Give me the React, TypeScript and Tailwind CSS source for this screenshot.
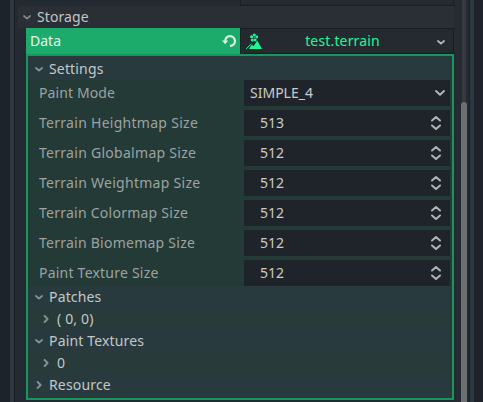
import type { ReactNode } from "react";

function Chevron({ dir = "down", className = "" }: { dir?: "down" | "right"; className?: string }) {
  return (
    <svg width="8" height="8" viewBox="0 0 8 8" fill="none" stroke="currentColor" strokeWidth="1.9" strokeLinecap="round" strokeLinejoin="round" className={`shrink-0 ${className}`}>
      <path d={dir === "down" ? "M1 3 4 5.6 7 3" : "M2.6 1 5.6 4 2.6 7"} />
    </svg>
  );
}

function ResetIcon() {
  return (
    <svg width="14" height="14" viewBox="0 0 14 14" className="shrink-0 text-[#dcefe5]">
      <path d="M3.2 7.4A4.9 4.9 0 1 1 8 11.9" fill="none" stroke="currentColor" strokeWidth="2.1" />
      <path d="M0 6.6H6.2L3.1 10.2Z" fill="currentColor" />
    </svg>
  );
}

function TerrainIcon() {
  return (
    <svg width="16" height="16" viewBox="0 0 16 16" className="shrink-0 text-[#1dfa95]" fill="currentColor">
      <path d="M3 16 6 11.6 7.6 13.2 11.2 7.6 16 16Z" />
      <path d="M0.2 15.8 5.4 10.8" stroke="currentColor" strokeWidth="1" fill="none" />
      <circle cx="8.3" cy="2" r="1.5" />
      <circle cx="5.6" cy="3.7" r="1.5" />
      <circle cx="10.8" cy="4" r="1.4" />
      <circle cx="6.3" cy="7" r="1.5" />
      <circle cx="9.2" cy="7" r="1.4" />
      <circle cx="8.2" cy="4.6" r="0.7" />
    </svg>
  );
}

function Spinner() {
  return (
    <svg width="12" height="16" viewBox="0 0 12 16" fill="none" stroke="#b1b4b6" strokeWidth="2" strokeLinecap="round" strokeLinejoin="round">
      <path d="M2 5.5 6 2 10 5.5M2 10.5 6 14 10 10.5" />
    </svg>
  );
}

function Section({ label, nested = false, open = false }: { label: string; nested?: boolean; open?: boolean }) {
  return (
    <div className={`flex h-[22px] items-center tracking-[0.16px] text-[#c3c8c8] ${nested ? "bg-[#283b3a] pl-[14px]" : "bg-[#283a3d] pl-[7px]"}`}>
      <Chevron dir={open ? "down" : "right"} className="text-[#87908f]" />
      <span className={nested ? "ml-[7px]" : "ml-[6px]"}>{label}</span>
    </div>
  );
}

function Row({ label, tracking, children }: { label: string; tracking: string; children: ReactNode }) {
  return (
    <div className="mr-[2px] flex h-[26px]">
      <div className={`flex w-[216px] items-center pl-[11px] text-[#9da3a2] ${tracking}`}>{label}</div>
      <div className="flex flex-1 items-center justify-between bg-[#1f242a] text-[#c9cbcc]">{children}</div>
    </div>
  );
}

const sizes: [string, string, string][] = [
  ["Terrain Heightmap Size", "513", "tracking-[0.28px]"],
  ["Terrain Globalmap Size", "512", "tracking-[0.28px]"],
  ["Terrain Weightmap Size", "512", "tracking-[0.28px]"],
  ["Terrain Colormap Size", "512", "tracking-[0.25px]"],
  ["Terrain Biomemap Size", "512", "tracking-[0.25px]"],
  ["Paint Texture Size", "512", "tracking-[0.22px]"],
];

export default function App() {
  return (
    <div className="flex h-[402px] w-[483px] overflow-hidden bg-[#242a31] font-['Noto_Sans',sans-serif] text-[14px] leading-[20px] whitespace-pre">
      <div className="w-[10px] bg-[#1e232a]" />
      <div className="w-[4px] bg-[#2f3841]" />
      <div className="w-px bg-[#1b2027]" />
      <div className="ml-[3px] flex w-[436px] flex-col">
        <div className="flex h-[6px] justify-end">
          <div className="w-[214px] border-x border-b border-[#1a1e23] bg-[#242a31]" />
        </div>
        <div className="flex h-[22px] items-center bg-[#292f35] pl-[5px] tracking-[0.1px] text-[#c3c6c8]">
          <Chevron dir="down" className="text-[#7f8387]" />
          <span className="ml-[6px]">Storage</span>
        </div>
        <div className="ml-[8px] flex h-[26px]">
          <div className="flex w-[214px] items-center justify-between bg-[#1cab6b] pr-[4px] pl-[4px] text-[#e4f6ed]">
            <span>Data</span>
            <ResetIcon />
          </div>
          <div className="flex w-[214px] items-center border border-[#1a1e23] bg-[#242a30] pr-[8px] pl-[5px] text-[#1dfa95]">
            <TerrainIcon />
            <span className="flex-1 pr-[14px] text-center tracking-[0.16px]">test.terrain</span>
            <Chevron className="mt-px text-[#b1b4b6]" />
          </div>
        </div>
        <div className="ml-[8px] h-[346px] border-2 border-[#19955e] bg-[#283a3d] py-[2px]">
          <Section label="Settings" open />
          <div className="flex flex-col gap-[4px] bg-[#233a37]">
            <Row label="Paint Mode" tracking="tracking-[0.1px]">
              <span className="pl-[6px]">SIMPLE_4</span>
              <svg width="12" height="8" viewBox="0 0 12 8" fill="none" stroke="#b1b4b6" strokeWidth="2" strokeLinecap="round" strokeLinejoin="round" className="mr-[4px]">
                <path d="M2 2 6 5.8 10 2" />
              </svg>
            </Row>
            {sizes.map(([label, value, tracking]) => (
              <Row key={label} label={label} tracking={tracking}>
                <span className="pl-[16px]">{value}</span>
                <span className="mr-[8px]"><Spinner /></span>
              </Row>
            ))}
          </div>
          <Section label="Patches" open />
          <Section label="( 0, 0)" nested />
          <Section label="Paint Textures" open />
          <Section label="0" nested />
          <Section label="Resource" />
        </div>
      </div>
      <div className="flex w-[15px] bg-[#252b31] pl-[7px]">
        <div className="flex w-[6px] flex-col items-center">
          <div className="h-[102px] w-[4px] bg-[#343a40]" />
          <div className="w-[6px] flex-1 rounded-t-[3px] bg-[#6c7073]" />
        </div>
      </div>
      <div className="w-px bg-[#1b2027]" />
      <div className="w-[4px] bg-[#2e3840]" />
      <div className="flex-1 bg-[#1e232b]" />
    </div>
  );
}
